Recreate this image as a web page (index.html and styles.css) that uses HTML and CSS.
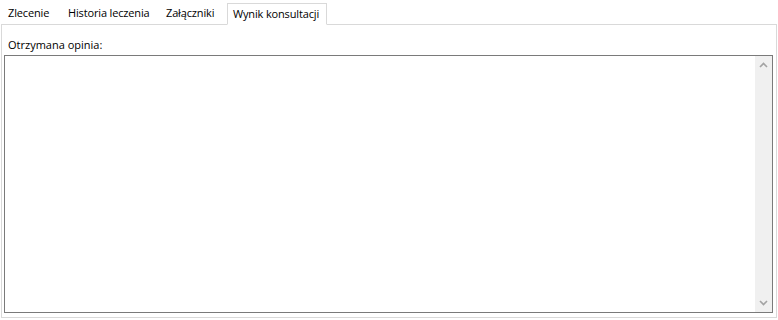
FILE: index.html
```html
<!DOCTYPE html>
<html lang="pl">
  <head>
    <meta charset="UTF-8" />
    <title>Wynik konsultacji</title>
    <link rel="stylesheet" href="styles.css">
  </head>
  <body>
    <div class="tabs">
      <div class="tab tab-order">Zlecenie</div>
      <div class="tab tab-history">Historia leczenia</div>
      <div class="tab tab-files">Załączniki</div>
      <div class="tab tab-result active">Wynik konsultacji</div>
    </div>

    <div class="panel">
      <label class="field-label">Otrzymana opinia:</label>
      <div class="memo">
        <div class="memo-text"></div>
        <div class="scrollbar">
          <svg class="arrow" width="17" height="17" viewBox="0 0 17 17">
            <polyline points="5,10 8.5,6.5 12,10" fill="none" stroke="#a3a3a3" stroke-width="1.6" />
          </svg>
          <svg class="arrow" width="17" height="17" viewBox="0 0 17 17">
            <polyline points="5,7 8.5,10.5 12,7" fill="none" stroke="#a3a3a3" stroke-width="1.6" />
          </svg>
        </div>
      </div>
    </div>
  </body>
</html>
```

FILE: styles.css
```css
* {
  margin: 0;
  padding: 0;
  box-sizing: border-box;
}

body {
  font-family: "Open Sans", "Noto Sans", sans-serif;
  font-size: 11px;
  color: #000000;
  background: #ffffff;
  width: 778px;
  height: 320px;
  overflow: hidden;
}

/* Tab strip */
.tabs {
  display: flex;
  align-items: flex-end;
  height: 24px;
  padding-left: 2px;
}

.tab {
  height: 20px;
  line-height: 18px;
  padding-left: 6px;
  letter-spacing: -0.15px;
  white-space: nowrap;
}

.tab-order {
  width: 60px;
}

.tab-history {
  width: 98px;
}

.tab-files {
  width: 67px;
}

.tab.active {
  position: relative;
  z-index: 2;
  width: 100px;
  height: 22px;
  margin-bottom: -1px;
  padding-left: 5px;
  line-height: 20px;
  background: #ffffff;
  border: 1px solid #d9d9d9;
  border-bottom: 1px solid #ffffff;
}

/* Tab page */
.panel {
  margin: 0 1px;
  height: 294px;
  border: 1px solid #d9d9d9;
  padding: 12px 2px 4px;
  display: flex;
  flex-direction: column;
}

.field-label {
  display: block;
  height: 16px;
  line-height: 16px;
  padding-left: 4px;
  margin-bottom: 2px;
}

.memo {
  flex: 1;
  display: flex;
  border: 1px solid #7a7a7a;
  background: #ffffff;
  margin-right: 1px;
}

.memo-text {
  flex: 1;
}

.scrollbar {
  width: 17px;
  background: #f0f0f0;
  display: flex;
  flex-direction: column;
  justify-content: space-between;
  padding: 1px 0;
}

.arrow {
  display: block;
}
```
